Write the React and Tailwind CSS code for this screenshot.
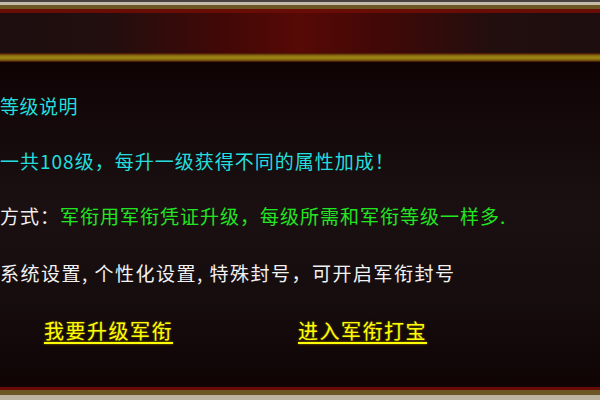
const font = { fontFamily: '"Noto Sans CJK SC", "Noto Sans", sans-serif' };

function Line({ children, className = "" }) {
  return (
    <div className={`h-[20px] flex items-center whitespace-nowrap text-[19px] leading-none ${className}`}>
      {children}
    </div>
  );
}

export default function App() {
  return (
    <div className="w-[600px] h-[400px] flex flex-col overflow-hidden bg-[#120506]" style={font}>
      {/* top frame */}
      <div className="h-[2px] bg-[#4a4242]" />
      <div className="h-[3px] bg-[#c4bca8]" />
      <div className="h-[4px] bg-[#6c5624]" />
      <div className="h-[4px] bg-[#6a0c06]" />
      <div className="h-[40px] bg-[linear-gradient(to_right,#1e0e0f_0%,#220e0e_18%,#430806_38%,#570905_50%,#430806_62%,#220e0e_82%,#1e0e0f_100%)]" />
      <div className="h-[9px] bg-[linear-gradient(to_bottom,#4a0c06_0%,#8a7012_30%,#a08a14_55%,#7a5c10_80%,#3a0804_100%)]" />

      {/* body */}
      <div className="flex-1 flex flex-col pt-[33px] bg-[linear-gradient(to_bottom,#100304_0%,#1a1012_45%,#150c0e_75%,#100404_100%)]">
        <Line className="text-[#22dede] tracking-[0.5px]">等级说明</Line>
        <Line className="mt-[35px] text-[#22dede] tracking-[1px]">一共108级，每升一级获得不同的属性加成！</Line>
        <Line className="mt-[35px] tracking-[1px]">
          <span className="text-[#f0f0f0]">方式：</span>
          <span className="text-[#22e622]">军衔用军衔凭证升级，每级所需和军衔等级一样多.</span>
        </Line>
        <Line className="mt-[37px] text-[#f2f2f2] tracking-[1.5px]">系统设置, 个性化设置, 特殊封号，可开启军衔封号</Line>

        <div className="mt-[38px] h-[22px] flex items-center">
          <a className="ml-[44px] w-[128px] text-[20px] tracking-[1.5px] leading-none text-[#ffff00] underline underline-offset-[3px] whitespace-nowrap [text-shadow:0_0_2px_#8a7000]">
            我要升级军衔
          </a>
          <a className="ml-[126px] w-[128px] text-[20px] tracking-[1.5px] leading-none text-[#ffff00] underline underline-offset-[3px] whitespace-nowrap [text-shadow:0_0_2px_#8a7000]">
            进入军衔打宝
          </a>
        </div>
      </div>

      {/* bottom frame */}
      <div className="h-[3px] bg-[#6a0c06]" />
      <div className="h-[5px] bg-[#6c5624]" />
      <div className="h-[5px] bg-[#bcb4a0]" />
    </div>
  );
}
